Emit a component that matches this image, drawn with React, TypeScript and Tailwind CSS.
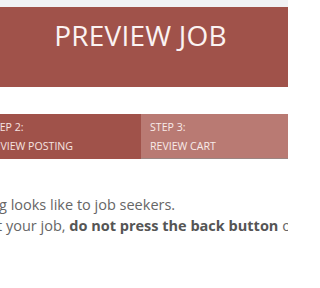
export default function App() {
  return (
    <div className="w-[288px] h-[288px] overflow-hidden bg-white font-['Open_Sans',sans-serif]">
      <div className="h-[7px] bg-[#f1f2f4]" />
      <div className="h-[80px] bg-[#a0524a] flex items-center justify-center pb-[24px] pr-[7px]">
        <h1 className="text-[28px] text-[#fbf3f2] tracking-[0.2px] whitespace-nowrap">PREVIEW JOB</h1>
      </div>
      <div className="mt-[27px] flex ml-[-21px] whitespace-nowrap">
        <div className="w-[162px] h-[45px] bg-[#a0524a] text-[#f6e4e1] text-[10.6px] leading-[19px] px-[9px] pt-[4px] shrink-0">
          <div>STEP 2:</div>
          <div>REVIEW POSTING</div>
        </div>
        <div className="w-[170px] h-[45px] bg-[#b97a73] text-[#f8ebe9] text-[10.6px] leading-[19px] px-[9px] pt-[4px] shrink-0 border-b border-[#9c8581]">
          <div>STEP 3:</div>
          <div>REVIEW CART</div>
        </div>
      </div>
      <div className="mt-[35px] text-[14.5px] leading-[21px] text-[#666666] whitespace-nowrap">
        <div className="ml-[-1px]">g looks like to job seekers.</div>
        <div className="ml-[-3px]">
          t your job, <strong className="font-bold text-[#555555]">do not press the back button</strong> or
        </div>
      </div>
    </div>
  );
}
